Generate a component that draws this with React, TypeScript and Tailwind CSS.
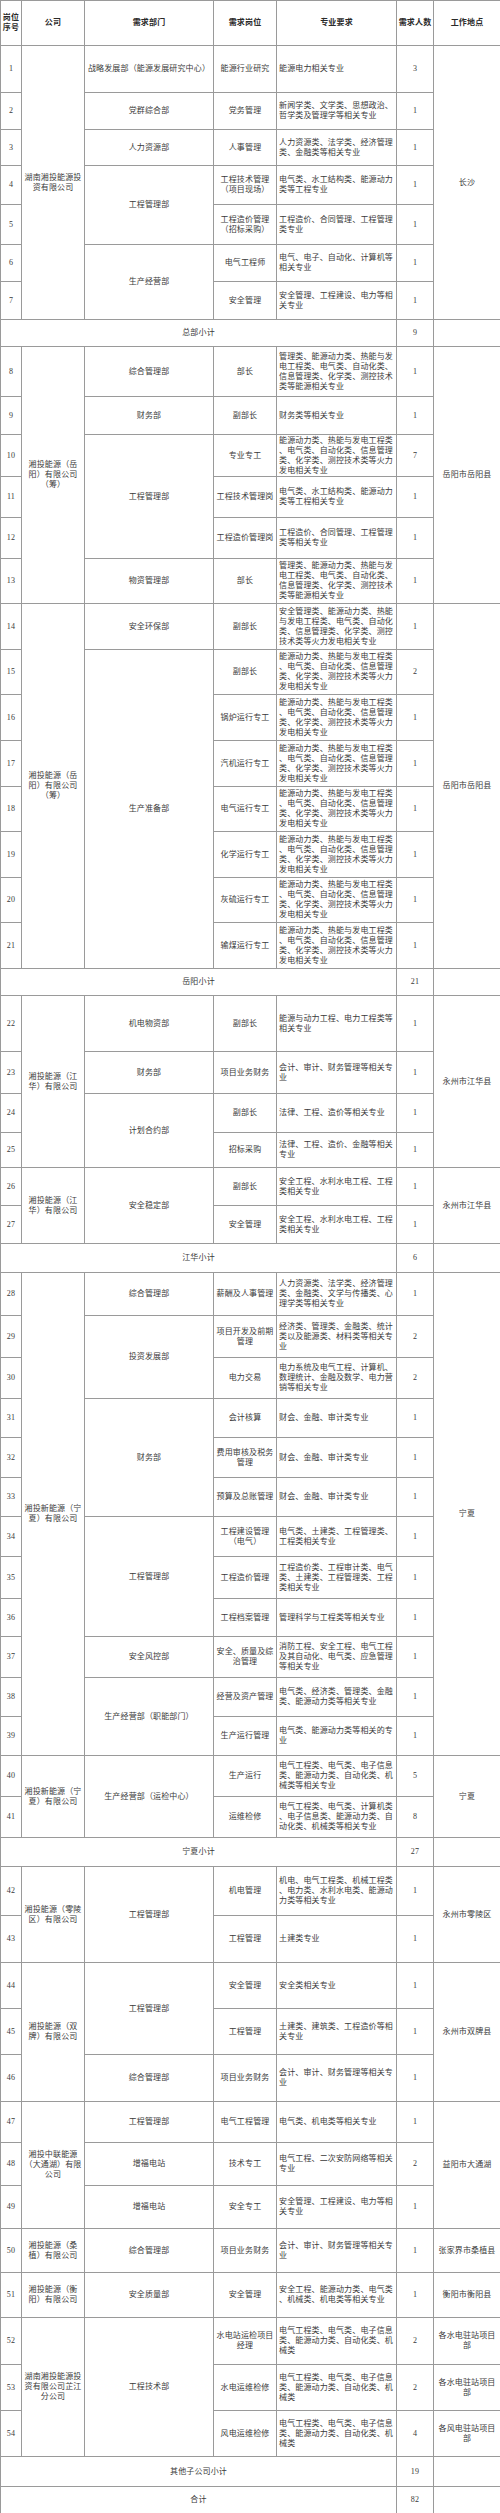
import React from 'react';

type Span = { t: string; s: number };
type DataRow =
  | { kind: 'row'; n: number; h: string; c?: Span; d?: Span; p: string; r: string; k: number; l?: Span }
  | { kind: 'sub'; label: string; k: number; h: string };

const A = '能源动力类、热能与发电工程类\n、电气类、自动化类、信息管理\n类、化学类、测控技术类等火力\n发电相关专业';
const B = '管理类、能源动力类、热能与发\n电工程类、电气类、自动化类、\n信息管理类、化学类、测控技术\n类等能源相关专业';
const E = '电气工程类、电气类、电子信息\n类、能源动力类、自动化类、机\n械类';
const ACC = '会计、审计、财务管理等相关专\n业';
const FIN = '财会、金融、审计类专业';
const SAFE = '安全工程、水利水电工程、工程\n类相关专业';

const R = (o: Omit<Extract<DataRow, { kind: 'row' }>, 'kind'>): DataRow => ({ kind: 'row', ...o });
const S = (label: string, k: number, h: string): DataRow => ({ kind: 'sub', label, k, h });

const rows: DataRow[] = [
  R({ n: 1, h: 'h-[47px]', c: { t: '湖南湘投能源投\n资有限公司', s: 7 }, d: { t: '战略发展部（能源发展研究中心）', s: 1 }, p: '能源行业研究', r: '能源电力相关专业', k: 3, l: { t: '长沙', s: 7 } }),
  R({ n: 2, h: 'h-[37px]', d: { t: '党群综合部', s: 1 }, p: '党务管理', r: '新闻学类、文学类、思想政治、\n哲学类及管理学等相关专业', k: 1 }),
  R({ n: 3, h: 'h-[36px]', d: { t: '人力资源部', s: 1 }, p: '人事管理', r: '人力资源类、法学类、经济管理\n类、金融类等相关专业', k: 1 }),
  R({ n: 4, h: 'h-[39px]', d: { t: '工程管理部', s: 2 }, p: '工程技术管理\n（项目现场）', r: '电气类、水工结构类、能源动力\n类等工程专业', k: 1 }),
  R({ n: 5, h: 'h-[40px]', p: '工程造价管理\n（招标采购）', r: '工程造价、合同管理、工程管理\n类专业', k: 1 }),
  R({ n: 6, h: 'h-[37px]', d: { t: '生产经营部', s: 2 }, p: '电气工程师', r: '电气、电子、自动化、计算机等\n相关专业', k: 1 }),
  R({ n: 7, h: 'h-[38px]', p: '安全管理', r: '安全管理、工程建设、电力等相\n关专业', k: 1 }),
  S('总部小计', 9, 'h-[27px]'),
  R({ n: 8, h: 'h-[50px]', c: { t: '湘投能源（岳\n阳）有限公司\n（筹）', s: 6 }, d: { t: '综合管理部', s: 1 }, p: '部长', r: B, k: 1, l: { t: '岳阳市岳阳县', s: 6 } }),
  R({ n: 9, h: 'h-[38px]', d: { t: '财务部', s: 1 }, p: '副部长', r: '财务类等相关专业', k: 1 }),
  R({ n: 10, h: 'h-[42px]', d: { t: '工程管理部', s: 3 }, p: '专业专工', r: A, k: 7 }),
  R({ n: 11, h: 'h-[41px]', p: '工程技术管理岗', r: '电气类、水工结构类、能源动力\n类等工程相关专业', k: 1 }),
  R({ n: 12, h: 'h-[41px]', p: '工程造价管理岗', r: '工程造价、合同管理、工程管理\n类等相关专业', k: 1 }),
  R({ n: 13, h: 'h-[45px]', d: { t: '物资管理部', s: 1 }, p: '部长', r: B, k: 1 }),
  R({ n: 14, h: 'h-[46px]', c: { t: '湘投能源（岳\n阳）有限公司\n（筹）', s: 8 }, d: { t: '安全环保部', s: 1 }, p: '副部长', r: '安全管理类、能源动力类、热能\n与发电工程类、电气类、自动化\n类、信息管理类、化学类、测控\n技术类等火力发电相关专业', k: 1, l: { t: '岳阳市岳阳县', s: 8 } }),
  R({ n: 15, h: 'h-[45px]', d: { t: '生产准备部', s: 7 }, p: '副部长', r: A, k: 2 }),
  R({ n: 16, h: 'h-[46px]', p: '锅炉运行专工', r: A, k: 1 }),
  R({ n: 17, h: 'h-[46px]', p: '汽机运行专工', r: A, k: 1 }),
  R({ n: 18, h: 'h-[45px]', p: '电气运行专工', r: A, k: 1 }),
  R({ n: 19, h: 'h-[46px]', p: '化学运行专工', r: A, k: 1 }),
  R({ n: 20, h: 'h-[45px]', p: '灰硫运行专工', r: A, k: 1 }),
  R({ n: 21, h: 'h-[46px]', p: '输煤运行专工', r: A, k: 1 }),
  S('岳阳小计', 21, 'h-[27px]'),
  R({ n: 22, h: 'h-[56px]', c: { t: '湘投能源（江\n华）有限公司', s: 4 }, d: { t: '机电物资部', s: 1 }, p: '副部长', r: '能源与动力工程、电力工程类等\n相关专业', k: 1, l: { t: '永州市江华县', s: 4 } }),
  R({ n: 23, h: 'h-[42px]', d: { t: '财务部', s: 1 }, p: '项目业务财务', r: ACC, k: 1 }),
  R({ n: 24, h: 'h-[39px]', d: { t: '计划合约部', s: 2 }, p: '副部长', r: '法律、工程、造价等相关专业', k: 1 }),
  R({ n: 25, h: 'h-[35px]', p: '招标采购', r: '法律、工程、造价、金融等相关\n专业', k: 1 }),
  R({ n: 26, h: 'h-[38px]', c: { t: '湘投能源（江\n华）有限公司', s: 2 }, d: { t: '安全稳定部', s: 2 }, p: '副部长', r: SAFE, k: 1, l: { t: '永州市江华县', s: 2 } }),
  R({ n: 27, h: 'h-[38px]', p: '安全管理', r: SAFE, k: 1 }),
  S('江华小计', 6, 'h-[29px]'),
  R({ n: 28, h: 'h-[43px]', c: { t: '湘投新能源（宁\n夏）有限公司', s: 12 }, d: { t: '综合管理部', s: 1 }, p: '薪酬及人事管理', r: '人力资源类、法学类、经济管理\n类、金融类、文学与传播类、心\n理学类等相关专业', k: 1, l: { t: '宁夏', s: 12 } }),
  R({ n: 29, h: 'h-[42px]', d: { t: '投资发展部', s: 2 }, p: '项目开发及前期\n管理', r: '经济类、管理类、金融类、统计\n类以及能源类、材料类等相关专\n业', k: 2 }),
  R({ n: 30, h: 'h-[41px]', p: '电力交易', r: '电力系统及电气工程、计算机、\n数理统计、金融及数学、电力营\n销等相关专业', k: 2 }),
  R({ n: 31, h: 'h-[39px]', d: { t: '财务部', s: 3 }, p: '会计核算', r: FIN, k: 1 }),
  R({ n: 32, h: 'h-[40px]', p: '费用审核及税务\n管理', r: FIN, k: 1 }),
  R({ n: 33, h: 'h-[39px]', p: '预算及总账管理', r: FIN, k: 1 }),
  R({ n: 34, h: 'h-[40px]', d: { t: '工程管理部', s: 3 }, p: '工程建设管理\n（电气）', r: '电气类、土建类、工程管理类、\n工程类相关专业', k: 1 }),
  R({ n: 35, h: 'h-[42px]', p: '工程造价管理', r: '工程造价类、工程审计类、电气\n类、土建类、工程管理类、工程\n类相关专业', k: 1 }),
  R({ n: 36, h: 'h-[38px]', p: '工程档案管理', r: '管理科学与工程类等相关专业', k: 1 }),
  R({ n: 37, h: 'h-[41px]', d: { t: '安全风控部', s: 1 }, p: '安全、质量及综\n治管理', r: '消防工程、安全工程、电气工程\n及其自动化、电气类、应急管理\n等相关专业', k: 1 }),
  R({ n: 38, h: 'h-[39px]', d: { t: '生产经营部（职能部门）', s: 2 }, p: '经营及资产管理', r: '电气类、经济类、管理类、金融\n类、能源动力类等相关专业', k: 1 }),
  R({ n: 39, h: 'h-[39px]', p: '生产运行管理', r: '电气类、能源动力类等相关的专\n业', k: 1 }),
  R({ n: 40, h: 'h-[41px]', c: { t: '湘投新能源（宁\n夏）有限公司', s: 2 }, d: { t: '生产经营部（运检中心）', s: 2 }, p: '生产运行', r: '电气工程类、电气类、电子信息\n类、能源动力类、自动化类、机\n械类等相关专业', k: 5, l: { t: '宁夏', s: 2 } }),
  R({ n: 41, h: 'h-[41px]', p: '运维检修', r: '电气工程类、电气类、计算机类\n、电子信息类、能源动力类、自\n动化类、机械类等相关专业', k: 8 }),
  S('宁夏小计', 27, 'h-[29px]'),
  R({ n: 42, h: 'h-[49px]', c: { t: '湘投能源（零陵\n区）有限公司', s: 2 }, d: { t: '工程管理部', s: 2 }, p: '机电管理', r: '机电、电气工程类、机械工程类\n、电力类、水利水电类、能源动\n力类等相关专业', k: 1, l: { t: '永州市零陵区', s: 2 } }),
  R({ n: 43, h: 'h-[47px]', p: '工程管理', r: '土建类专业', k: 1 }),
  R({ n: 44, h: 'h-[46px]', c: { t: '湘投能源（双\n牌）有限公司', s: 3 }, d: { t: '工程管理部', s: 2 }, p: '安全管理', r: '安全类相关专业', k: 1, l: { t: '永州市双牌县', s: 3 } }),
  R({ n: 45, h: 'h-[46px]', p: '工程管理', r: '土建类、建筑类、工程造价等相\n关专业', k: 1 }),
  R({ n: 46, h: 'h-[47px]', d: { t: '综合管理部', s: 1 }, p: '项目业务财务', r: ACC, k: 1 }),
  R({ n: 47, h: 'h-[41px]', c: { t: '湘投中联能源\n（大通湖）有限\n公司', s: 3 }, d: { t: '工程管理部', s: 1 }, p: '电气工程管理', r: '电气类、机电类等相关专业', k: 1, l: { t: '益阳市大通湖', s: 3 } }),
  R({ n: 48, h: 'h-[43px]', d: { t: '增福电站', s: 1 }, p: '技术专工', r: '电气工程、二次安防网络等相关\n专业', k: 2 }),
  R({ n: 49, h: 'h-[43px]', d: { t: '增福电站', s: 1 }, p: '安全专工', r: '安全管理、工程建设、电力等相\n关专业', k: 1 }),
  R({ n: 50, h: 'h-[44px]', c: { t: '湘投能源（桑\n植）有限公司', s: 1 }, d: { t: '综合管理部', s: 1 }, p: '项目业务财务', r: ACC, k: 1, l: { t: '张家界市桑植县', s: 1 } }),
  R({ n: 51, h: 'h-[45px]', c: { t: '湘投能源（衡\n阳）有限公司', s: 1 }, d: { t: '安全质量部', s: 1 }, p: '安全管理', r: '安全工程、能源动力类、电气类\n、机械类、机电类等相关专业', k: 1, l: { t: '衡阳市衡阳县', s: 1 } }),
  R({ n: 52, h: 'h-[47px]', c: { t: '湖南湘投能源投\n资有限公司芷江\n分公司', s: 3 }, d: { t: '工程技术部', s: 3 }, p: '水电站运检项目\n经理', r: E, k: 2, l: { t: '各水电驻站项目\n部', s: 1 } }),
  R({ n: 53, h: 'h-[46px]', p: '水电运维检修', r: E, k: 2, l: { t: '各水电驻站项目\n部', s: 1 } }),
  R({ n: 54, h: 'h-[46px]', p: '风电运维检修', r: E, k: 4, l: { t: '各风电驻站项目\n部', s: 1 } }),
  S('其他子公司小计', 19, 'h-[30px]'),
  S('合计', 82, 'h-[27px]'),
];

const cell = 'border border-[#9a9a9a] p-0 align-middle text-center whitespace-pre leading-[10px]';
const reqCell = 'border border-[#9a9a9a] py-0 pl-[2px] pr-0 align-middle text-left whitespace-pre leading-[10px]';

export default function App() {
  return (
    <div className="w-[500px] bg-white font-['Liberation_Serif','Noto_Sans_CJK_SC',serif] text-[8px] tracking-[0.14px] text-[#3a3a3a]">
      <table className="w-[500px] table-fixed border-collapse">
        <colgroup>
          <col className="w-[21px]" />
          <col className="w-[63px]" />
          <col className="w-[129px]" />
          <col className="w-[63px]" />
          <col className="w-[120px]" />
          <col className="w-[37px]" />
          <col className="w-[67px]" />
        </colgroup>
        <thead>
          <tr className="h-[45px] font-bold text-[#2a2a2a]">
            <th className={cell + ' font-bold'}>{'岗位\n序号'}</th>
            <th className={cell + ' font-bold'}>公司</th>
            <th className={cell + ' font-bold'}>需求部门</th>
            <th className={cell + ' font-bold'}>需求岗位</th>
            <th className={cell + ' font-bold'}>专业要求</th>
            <th className={cell + ' font-bold'}>需求人数</th>
            <th className={cell + ' font-bold'}>工作地点</th>
          </tr>
        </thead>
        <tbody>
          {rows.map((row, i) =>
            row.kind === 'sub' ? (
              <tr key={'s' + i} className={row.h}>
                <td colSpan={5} className={cell}>{row.label}</td>
                <td className={cell}>{row.k}</td>
                <td className={cell}></td>
              </tr>
            ) : (
              <tr key={row.n} className={row.h}>
                <td className={cell}>{row.n}</td>
                {row.c && <td rowSpan={row.c.s} className={cell}>{row.c.t}</td>}
                {row.d && <td rowSpan={row.d.s} className={cell}>{row.d.t}</td>}
                <td className={cell}>{row.p}</td>
                <td className={reqCell}>{row.r}</td>
                <td className={cell}>{row.k}</td>
                {row.l && <td rowSpan={row.l.s} className={cell}>{row.l.t}</td>}
              </tr>
            )
          )}
        </tbody>
      </table>
    </div>
  );
}
